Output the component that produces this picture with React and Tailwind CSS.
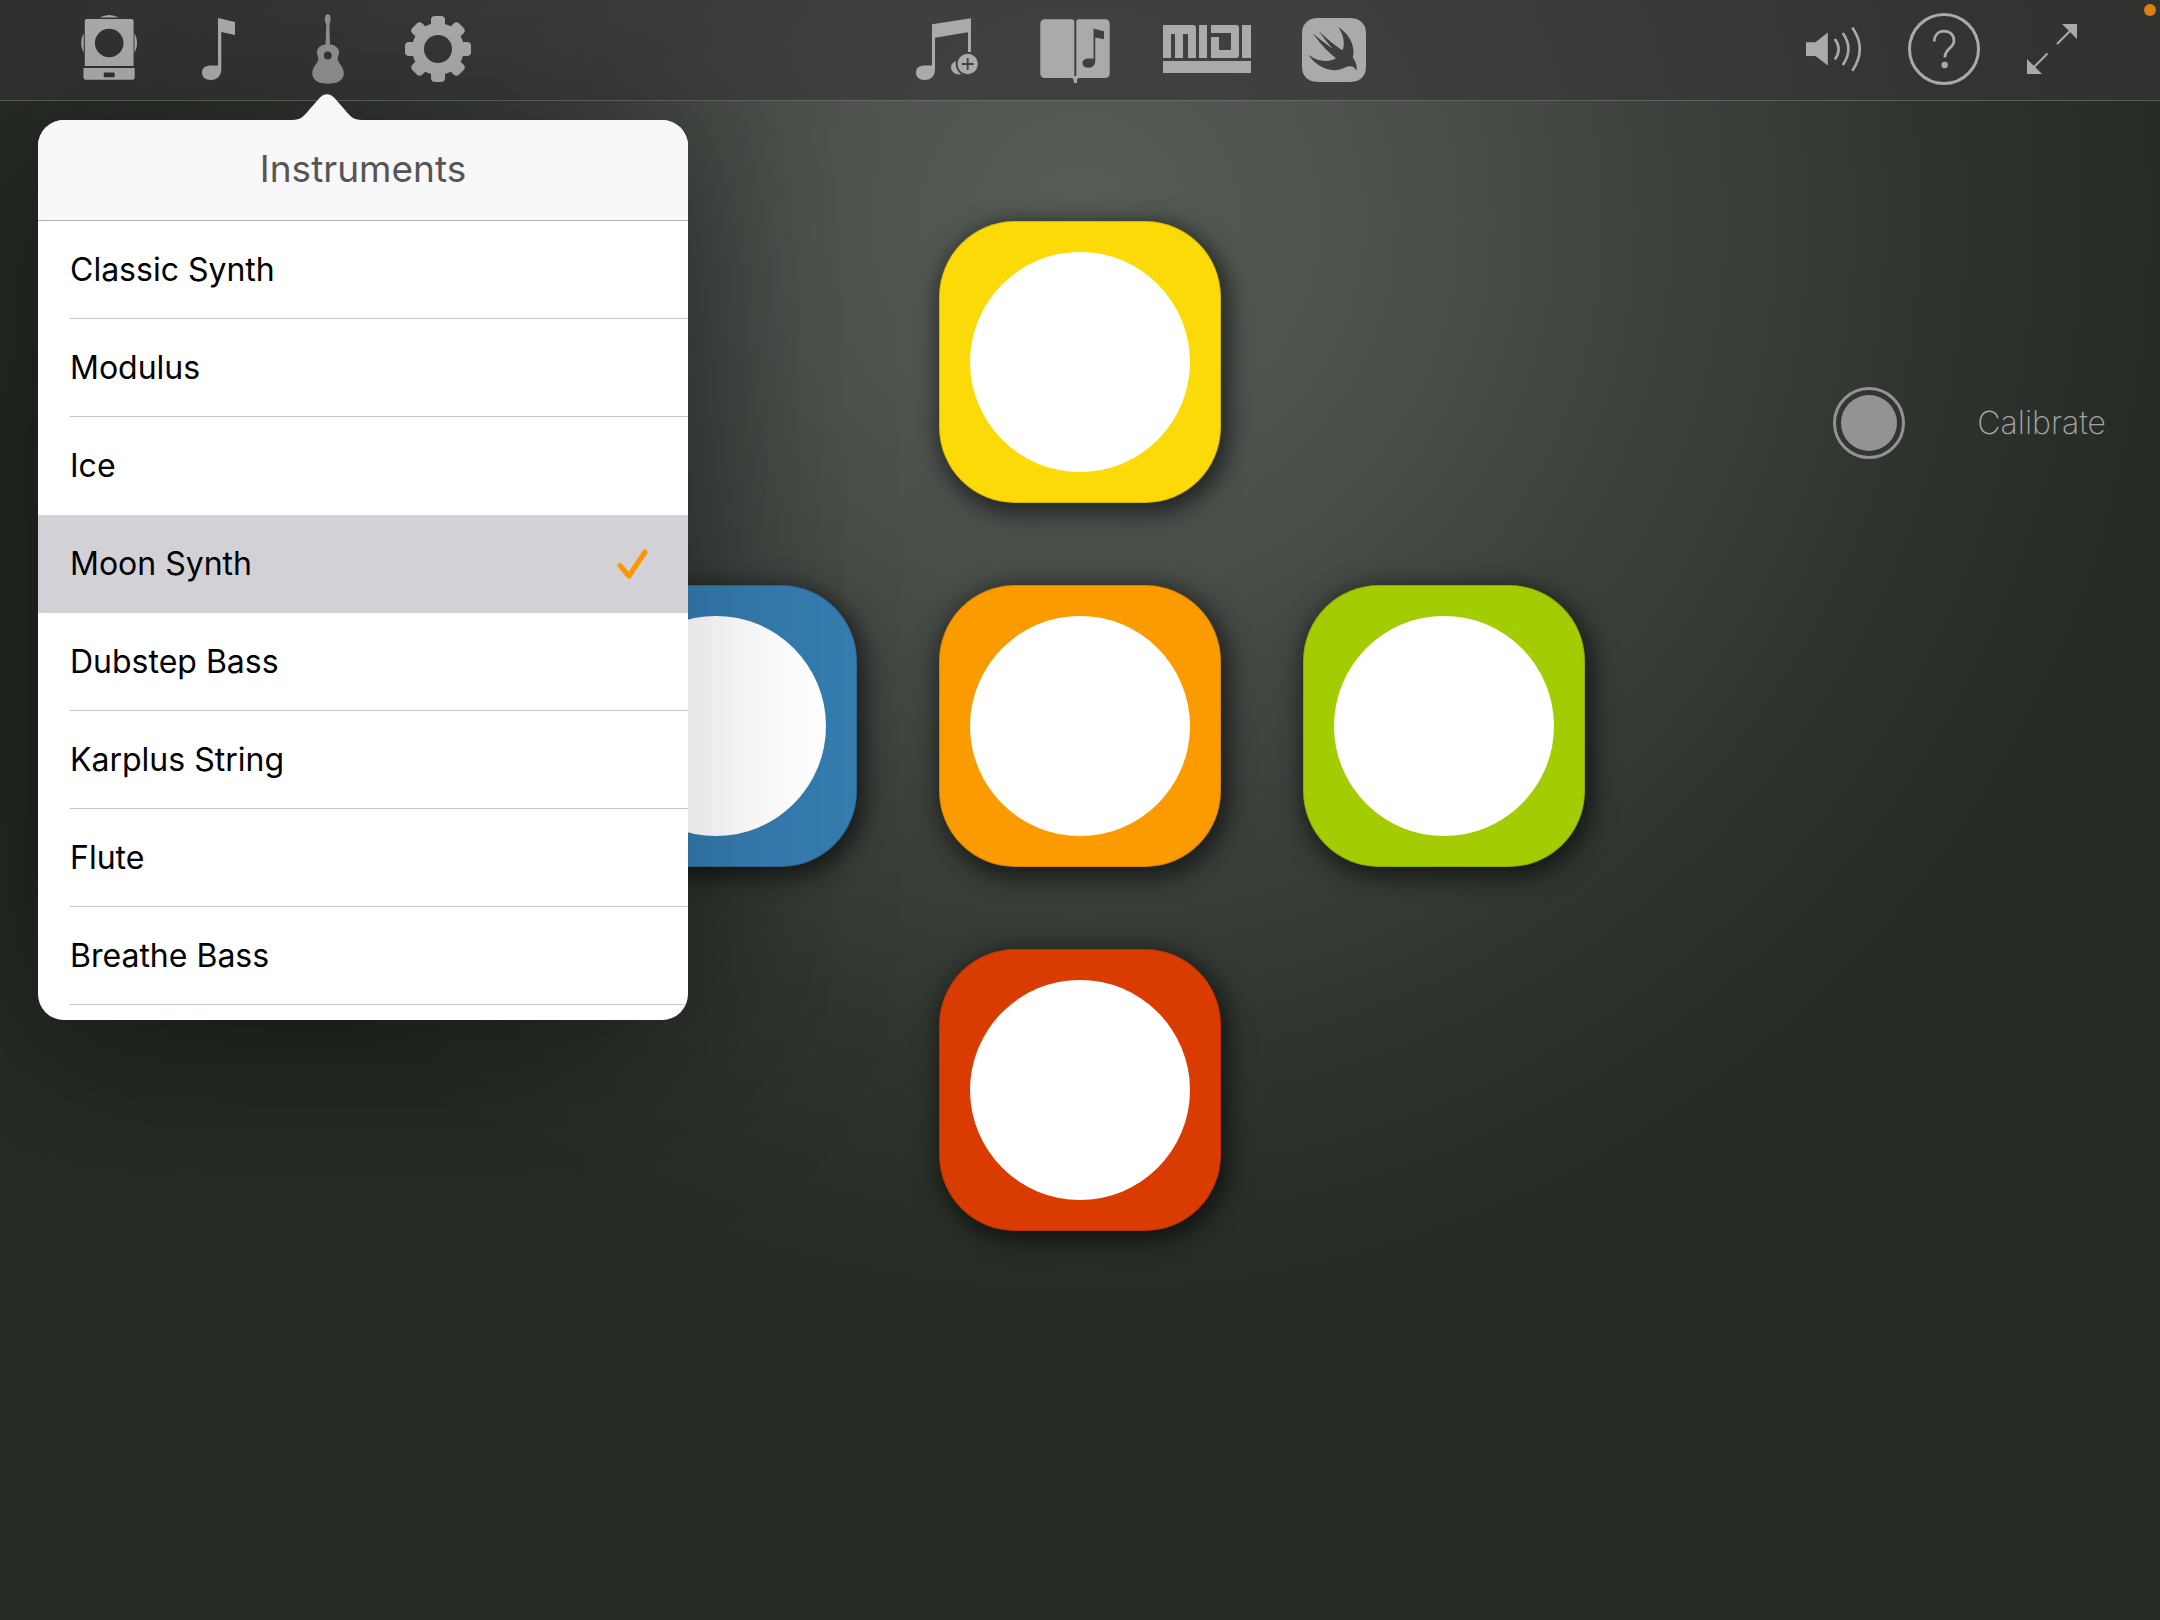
import React from "react";
import { SiSwift } from "react-icons/si";

const instruments = [
  "Classic Synth",
  "Modulus",
  "Ice",
  "Moon Synth",
  "Dubstep Bass",
  "Karplus String",
  "Flute",
  "Breathe Bass",
];
const selected = "Moon Synth";

function ToolButton({ label, className, children }) {
  return (
    <button type="button" aria-label={label} className={`flex h-[100px] items-center justify-center ${className}`}>
      {children}
    </button>
  );
}

function MetronomeIcon() {
  return (
    <svg viewBox="53 0 110 100" className="h-full w-full" fill="currentColor">
      <path d="M99.500 17.500 Q109 12.500 119 17.500 Z" />
      <path d="M83.700 33 Q78.500 43 83.700 53 Z" />
      <path d="M134.500 33 Q139.700 43 134.500 53 Z" />
      <path
        fillRule="evenodd"
        d="M87 19 H131.500 Q133.600 19 133.600 21 V66 H84.800 V21 Q84.800 19 87 19 Z M109.200 28.700 A14.300 14.300 0 1 0 109.200 57.300 A14.300 14.300 0 1 0 109.200 28.700 Z"
      />
      <path
        fillRule="evenodd"
        d="M83.500 68 H134.700 V77.500 Q134.700 79.800 132.500 79.800 H85.700 Q83.500 79.800 83.500 77.500 Z M104.500 72.500 Q103.700 72.500 103.700 73.500 V76.200 Q103.700 77.200 104.700 77.200 H113.700 Q114.700 77.200 114.700 76.200 V73.500 Q114.700 72.500 113.700 72.500 Z"
      />
    </svg>
  );
}

function NoteIcon() {
  return (
    <svg viewBox="163 0 110 100" className="h-full w-full" fill="currentColor">
      <path d="M218 18 L235 22 V35 L221.300 32 V69 C221.300 76 217 80 211 80 C205 80 202 77 202 72.500 C202 68 205 65.500 212 65.500 H218 Z" />
    </svg>
  );
}

function GuitarIcon() {
  return (
    <svg viewBox="273 0 110 100" className="h-full w-full" fill="currentColor">
      <path
        fillRule="evenodd"
        d="M325.500 15.500 Q327.500 13 330 15.500 Q331.300 18 330.300 22 L329.400 24 L330 44.500 C335 45 339.300 48 339 53 C338.700 56 337 57.500 338 60.500 C339.500 64.500 343.800 67.500 343.800 73.500 C343.800 80 338 83.800 328 83.800 C318 83.800 312.300 80 312.300 73.500 C312.300 67.500 316.500 64.500 318 60.500 C319 57.500 317.200 56 317 53 C316.800 48 320.500 45 325.500 44.500 L326.300 24 L325 22 Q324.300 18 325.500 15.500 Z M327.800 51.600 A3.900 3.900 0 1 0 327.800 59.400 A3.900 3.900 0 1 0 327.800 51.600 Z"
      />
    </svg>
  );
}

function GearIcon() {
  return (
    <svg viewBox="383 0 110 100" className="h-full w-full" fill="currentColor">
      <mask id="gear-hole">
        <rect x="383" y="0" width="110" height="100" fill="white" />
        <circle cx="438" cy="49" r="14" fill="black" />
      </mask>
      <g mask="url(#gear-hole)">
        <circle cx="438" cy="49" r="26" />
        {[0, 45, 90, 135].map((a) => (
          <rect key={a} x="431" y="16" width="14" height="66" rx="4" transform={`rotate(${a} 438 49)`} />
        ))}
      </g>
    </svg>
  );
}

function AddSongIcon() {
  return (
    <svg viewBox="882 0 129 100" className="h-full w-full" fill="currentColor">
      <mask id="badge-gap">
        <rect x="882" y="0" width="129" height="100" fill="white" />
        <circle cx="967.700" cy="64" r="12" fill="black" />
      </mask>
      <g mask="url(#badge-gap)">
        <path d="M932 24.300 L971 18.300 V52 H968 V32.300 L935 37.800 V69 C935 76 931 80 925 80 C919 80 916 77 916 72.500 C916 68 919 65.500 926 65.500 H932 Z" />
        <ellipse cx="959" cy="67.500" rx="8" ry="7" />
      </g>
      <path
        fillRule="evenodd"
        d="M967.700 53.800 A10.200 10.200 0 1 0 967.700 74.200 A10.200 10.200 0 1 0 967.700 53.800 Z M966.800 58 H968.600 V63.100 H973.700 V64.900 H968.600 V70 H966.800 V64.900 H961.700 V63.100 H966.800 Z"
      />
    </svg>
  );
}

function SongBookIcon() {
  return (
    <svg viewBox="1011 0 129 100" className="h-full w-full" fill="currentColor">
      <path d="M1045 19.300 H1071.500 Q1074.300 19.300 1074.300 22 V76 L1077 76 L1077 83 H1073.800 V80 Q1073.500 78 1071 78 H1045 Q1040.300 78 1040.300 73.300 V24 Q1040.300 19.300 1045 19.300 Z" />
      <path
        fillRule="evenodd"
        d="M1079 19.300 H1105 Q1109.700 19.300 1109.700 24 V73.300 Q1109.700 78 1105 78 H1079.500 Q1077 78 1076.800 80 L1076.300 76 V22 Q1076.300 19.300 1079 19.300 Z M1093.500 28.500 V58.500 H1089 C1084.500 58.500 1082.500 60.500 1082.500 63 C1082.500 66 1084.500 67.700 1088.500 67.700 C1093 67.700 1095.300 65 1095.300 60.500 V37.500 L1104 39.300 V31.300 Z"
      />
    </svg>
  );
}

function MidiIcon() {
  return (
    <svg viewBox="1140 0 129 100" className="h-full w-full" fill="currentColor">
      <rect x="1163" y="25" width="33" height="9" rx="3" />
      <rect x="1163" y="25" width="8" height="33" />
      <rect x="1175" y="30" width="8" height="28" />
      <rect x="1188" y="28" width="8" height="30" />
      <rect x="1199" y="25" width="8" height="33" />
      <rect x="1211" y="25" width="28" height="8" rx="3" />
      <rect x="1211" y="25" width="8" height="8" />
      <rect x="1231" y="28" width="8" height="27" />
      <rect x="1211" y="37" width="8" height="21" />
      <rect x="1211" y="50" width="28" height="8" rx="3" />
      <rect x="1242" y="25" width="9" height="33" />
      <rect x="1163" y="61" width="88" height="12" />
    </svg>
  );
}

function SpeakerIcon() {
  return (
    <svg viewBox="1777 0 110 100" className="h-full w-full" fill="currentColor">
      <path d="M1806 42.300 H1815.500 L1827.800 32.500 V65.500 L1815.500 56 H1806 Z" />
      <g fill="none" stroke="currentColor" strokeWidth="2.600">
        <path d="M1834.800 39 Q1842.500 49 1834.800 59.500" />
        <path d="M1842.800 33 Q1854 49 1842.800 65" />
        <path d="M1852.300 27.500 Q1867.300 49 1852.300 70.700" />
      </g>
    </svg>
  );
}

function HelpIcon() {
  return (
    <svg viewBox="1887 0 110 100" className="h-full w-full" fill="none" stroke="currentColor">
      <circle cx="1944" cy="49" r="34.500" strokeWidth="3" />
      <path
        d="M1934.200 41.500 C1934.500 35 1938.500 31.200 1944 31.200 C1950 31.200 1954 35 1954 40.500 C1954 48.500 1944.800 48 1944.800 57.500"
        strokeWidth="2.800"
      />
      <circle cx="1944.700" cy="65" r="3.200" fill="currentColor" stroke="none" />
    </svg>
  );
}

function ExpandIcon() {
  return (
    <svg viewBox="1997 0 110 100" className="h-full w-full" fill="currentColor">
      <path d="M2062 24 H2077 V39 Z" />
      <path d="M2027 59 V74 H2042 Z" />
      <path d="M2057 44 L2071 30 M2033 68 L2047.500 53.500" stroke="currentColor" strokeWidth="2" />
    </svg>
  );
}

function Pad({ label, className }) {
  return (
    <button
      type="button"
      aria-label={label}
      className={`flex size-[282px] items-center justify-center rounded-[76px] border border-black/15 shadow-[4px_6px_24px_4px_rgba(0,0,0,0.6)] ${className}`}
    >
      <span className="size-[220px] rounded-full bg-white" />
    </button>
  );
}

function InstrumentPopover() {
  return (
    <section
      aria-label="Instruments"
      className="absolute top-[120px] left-[38px] w-[650px] rounded-[26px] shadow-[0_0_160px_rgba(0,0,0,0.2)]"
    >
      <svg viewBox="0 0 70 27" className="absolute -top-[26px] left-[254px] h-[27px] w-[70px]" fill="#f8f8f8">
        <path d="M0 27 V26 C9 26 12 22 17 16 L28 3.500 C32 -1 38 -1 42 3.500 L53 16 C58 22 61 26 70 26 V27 Z" />
      </svg>
      <div className="overflow-hidden rounded-[26px] bg-white">
        <h2 className="border-b border-[#b2b2b2] bg-[#f8f8f8] pb-[3px] text-center text-[37px] leading-[97px] text-[#555]">
          Instruments
        </h2>
        <ul className="pb-[15px]">
          {instruments.map((name, i) => (
            <li key={name} className={name === selected ? "bg-[#d1d1d6]" : ""}>
              <button type="button" className="flex h-[98px] w-full pl-8 text-left text-[32px] text-black">
                <span
                  className={`flex flex-1 items-center justify-between self-stretch border-b pr-10 ${
                    name === selected || instruments[i + 1] === selected ? "border-transparent" : "border-[#c6c6c8]"
                  }`}
                >
                  {name}
                  {name === selected && (
                    <svg viewBox="0 0 32 32" className="size-8" fill="none" stroke="#ff9500" strokeWidth="5" strokeLinecap="round" strokeLinejoin="round">
                      <path d="M4 17.500 L13 28 L29 4" />
                    </svg>
                  )}
                </span>
              </button>
            </li>
          ))}
        </ul>
      </div>
    </section>
  );
}

export default function App() {
  return (
    <div className="relative min-h-screen overflow-hidden bg-[#262c25] bg-[radial-gradient(circle_1090px_at_50%_220px,#565c56_0%,#4e534e_25%,#3f443f_50%,#30362f_76%,#262c25_100%)] font-['Inter','Liberation_Sans',sans-serif]">
      <div
        aria-hidden="true"
        className="absolute top-[120px] left-[38px] h-[900px] w-[650px] rounded-[26px] shadow-[0_20px_190px_rgba(0,0,0,0.34)]"
      />
      <header className="relative flex items-center justify-between border-b border-white/20 bg-[#353635]/65 px-[53px] text-[#aaaaaa]">
        <nav aria-label="Sound" className="flex">
          <ToolButton label="Metronome" className="w-[110px]"><MetronomeIcon /></ToolButton>
          <ToolButton label="Notes" className="w-[110px]"><NoteIcon /></ToolButton>
          <ToolButton label="Instruments" className="w-[110px] text-[#909090]"><GuitarIcon /></ToolButton>
          <ToolButton label="Settings" className="w-[110px]"><GearIcon /></ToolButton>
        </nav>
        <nav aria-label="Songs" className="flex pl-[10px]">
          <ToolButton label="Add song" className="w-[129px]"><AddSongIcon /></ToolButton>
          <ToolButton label="Song book" className="w-[129px]"><SongBookIcon /></ToolButton>
          <ToolButton label="MIDI" className="w-[129px]"><MidiIcon /></ToolButton>
          <ToolButton label="Swift" className="w-[129px]"><SiSwift className="size-16" /></ToolButton>
        </nav>
        <nav aria-label="View" className="flex">
          <ToolButton label="Volume" className="w-[110px]"><SpeakerIcon /></ToolButton>
          <ToolButton label="Help" className="w-[110px]"><HelpIcon /></ToolButton>
          <ToolButton label="Full screen" className="w-[110px]"><ExpandIcon /></ToolButton>
        </nav>
      </header>
      <span className="absolute top-1 right-1 size-3 rounded-full bg-[#d9820f]" />

      <main className="relative grid grid-cols-[1fr_auto_1fr] pt-[120px]">
        <div className="col-start-2 grid grid-cols-3 gap-[82px]">
          <Pad label="Yellow pad" className="col-start-2 bg-[#fcda08]" />
          <Pad label="Blue pad" className="col-start-1 bg-[#347bae]" />
          <Pad label="Orange pad" className="bg-[#fb9b00]" />
          <Pad label="Green pad" className="bg-[#a4cc02]" />
          <Pad label="Red pad" className="col-start-2 bg-[#da3b00]" />
        </div>
        <button type="button" className="mt-[166px] mr-[54px] flex items-center gap-[72px] self-start justify-self-end text-[32px] font-extralight text-[#a5a5a5]">
          <span className="flex size-[72px] items-center justify-center rounded-full border-3 border-[#939393]">
            <span className="size-14 rounded-full bg-[#939393]" />
          </span>
          Calibrate
        </button>
      </main>

      <InstrumentPopover />
    </div>
  );
}
